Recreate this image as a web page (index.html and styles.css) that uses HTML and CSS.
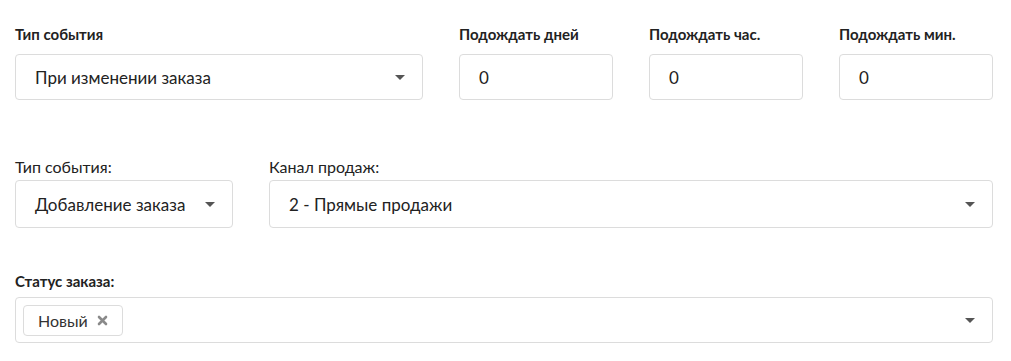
FILE: index.html
```html
<!DOCTYPE html>
<html lang="ru">
<head>
    <meta charset="UTF-8">
    <title>Событие</title>
    <link rel="stylesheet" href="styles.css">
</head>
<body>
    <div class="row row-top">
        <div class="field">
            <label class="label bold">Тип события</label>
            <div class="box select">
                <span>При изменении заказа</span>
                <span class="arrow"></span>
            </div>
        </div>
        <div class="field">
            <label class="label bold">Подождать дней</label>
            <div class="box">0</div>
        </div>
        <div class="field">
            <label class="label bold">Подождать час.</label>
            <div class="box">0</div>
        </div>
        <div class="field">
            <label class="label bold">Подождать мин.</label>
            <div class="box">0</div>
        </div>
    </div>

    <div class="row row-mid">
        <div class="field">
            <label class="label">Тип события:</label>
            <div class="box select small">
                <span>Добавление заказа</span>
                <span class="arrow"></span>
            </div>
        </div>
        <div class="field">
            <label class="label">Канал продаж:</label>
            <div class="box select small">
                <span>2 - Прямые продажи</span>
                <span class="arrow"></span>
            </div>
        </div>
    </div>

    <div class="row row-last">
        <div class="field">
            <label class="label bold">Статус заказа:</label>
            <div class="box select multi">
                <span class="tag">Новый
                    <svg class="tag-x" width="11" height="11" viewBox="0 0 11 11">
                        <path d="M2 2 L9 9 M9 2 L2 9" stroke="#8a8a8a" stroke-width="2.6" stroke-linecap="round"/>
                    </svg>
                </span>
                <span class="arrow"></span>
            </div>
        </div>
    </div>
</body>
</html>
```

FILE: styles.css
```css
body {
    margin: 0;
    padding: 24px 18px 0 15px;
    background-color: #ffffff;
    font-family: 'Lato', 'Noto Sans', sans-serif;
    color: #222;
}
.row {
    display: grid;
    gap: 36px;
}
.row-top {
    grid-template-columns: 408px 154px 154px 154px;
}
.row-mid {
    margin-top: 57px;
    grid-template-columns: 218px 1fr;
}
.row-last {
    margin-top: 43px;
    grid-template-columns: 1fr;
}
.field {
    display: flex;
    flex-direction: column;
}
.label {
    font-size: 15px;
    line-height: 20px;
    color: #222;
}
.row-top .label {
    margin-bottom: 10px;
}
.row-mid .label {
    margin-bottom: 3px;
    font-size: 16px;
}
.row-last .label {
    margin-bottom: 6px;
}
.bold {
    font-weight: bold;
}
.box {
    height: 46px;
    box-sizing: border-box;
    border: 1px solid #dcdcdc;
    border-radius: 4px;
    padding: 0 19px;
    display: flex;
    align-items: center;
    font-size: 17px;
    color: #222;
}
.small {
    height: 48px;
}
.select {
    justify-content: space-between;
    padding-right: 17px;
}
.arrow {
    width: 0;
    height: 0;
    border-left: 5px solid transparent;
    border-right: 5px solid transparent;
    border-top: 5px solid #555;
}
.multi {
    padding-left: 7px;
}
.tag {
    display: flex;
    align-items: center;
    height: 31px;
    box-sizing: border-box;
    border: 1px solid #dcdcdc;
    border-radius: 4px;
    padding: 0 14px 0 14px;
    font-size: 16px;
    color: #333;
}
.tag-x {
    margin-left: 9px;
}
```
